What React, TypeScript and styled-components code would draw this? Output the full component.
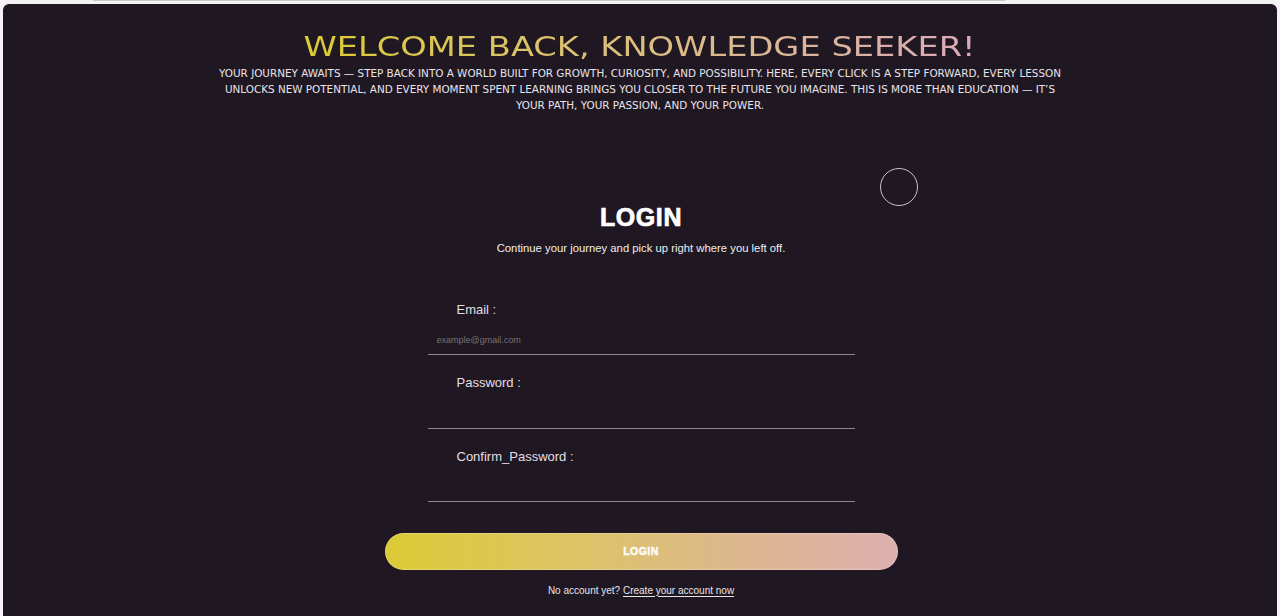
import React from "react";
import styled, { createGlobalStyle } from "styled-components";

const Global = createGlobalStyle`
  html, body { margin: 0; padding: 0; background: #f4f3f6; }
  body { font-family: "Liberation Sans", Arial, sans-serif; }
  * { box-sizing: border-box; }
`;

const Page = styled.div`
  width: 1280px;
  height: 616px;
  overflow: hidden;
  padding: 0 3px 0 3px;
  display: flex;
  flex-direction: column;
`;

const TopRule = styled.div`
  height: 1px;
  margin-left: 90px;
  width: 912px;
  background: #c9c7cc;
`;

const Panel = styled.main`
  margin-top: 3px;
  flex: 1;
  background: #1f1822;
  border-radius: 6px 6px 0 0;
  display: flex;
  flex-direction: column;
  align-items: center;
  padding-top: 28px;
`;

const Title = styled.h1`
  margin: 0;
  font-family: "DejaVu Sans", Verdana, sans-serif;
  font-weight: 400;
  font-size: 26px;
  line-height: 30px;
  letter-spacing: 0;
  background: linear-gradient(90deg, #dccb33 0%, #dcc07a 45%, #dcaab8 100%);
  -webkit-background-clip: text;
  background-clip: text;
  color: transparent;
  transform: scaleX(1.295);
  white-space: nowrap;
`;

const Intro = styled.p`
  margin: 3px 0 0;
  max-width: 852px;
  text-align: center;
  font-family: "DejaVu Sans", Verdana, sans-serif;
  font-size: 10.4px;
  line-height: 16px;
  color: #ebe3ea;
  text-transform: uppercase;
`;

const Card = styled.section`
  position: relative;
  width: 513px;
  margin-top: 89px;
  margin-left: 2px;
  display: flex;
  flex-direction: column;
  align-items: center;
`;

const Ring = styled.div`
  position: absolute;
  left: 495px;
  top: -34px;
  width: 38px;
  height: 38px;
  border-radius: 50%;
  border: 1px solid #c8c2c8;
`;

const CardTitle = styled.h2`
  margin: 0;
  font-family: "Liberation Sans", Arial, sans-serif;
  font-weight: 700;
  font-size: 25px;
  line-height: 30px;
  color: #ffffff;
  letter-spacing: 0.6px;
  -webkit-text-stroke: 0.7px #ffffff;
`;

const Subtitle = styled.p`
  margin: 9px 0 0;
  font-size: 11.3px;
  line-height: 14px;
  color: #f0eef0;
`;

const Form = styled.form`
  width: 427px;
  margin-top: 46.5px;
  display: flex;
  flex-direction: column;
  gap: 20px;
`;

const Field = styled.label`
  display: flex;
  flex-direction: column;
`;

const LabelText = styled.span`
  padding-left: 29px;
  font-size: 13px;
  line-height: 16px;
  color: #e4dfe4;
`;

const Input = styled.input`
  margin-top: 7.5px;
  height: 30px;
  background: transparent;
  border: none;
  border-bottom: 1px solid #8d8791;
  padding: 0 9px;
  font-family: "Liberation Sans", Arial, sans-serif;
  font-size: 9px;
  color: #ddd;
  outline: none;
  &::placeholder { color: #77717a; }
`;

const Button = styled.button`
  margin-top: 30.5px;
  width: 513px;
  height: 37px;
  border-radius: 19px;
  border: 1px solid rgba(255, 255, 255, 0.25);
  background: linear-gradient(90deg, #dccb35 0%, #dcc36a 40%, #dcb790 70%, #dcb0b0 100%);
  color: #ffffff;
  font-family: "Liberation Sans", Arial, sans-serif;
  font-weight: 700;
  font-size: 10.5px;
  letter-spacing: 0.5px;
  -webkit-text-stroke: 0.4px #ffffff;
  cursor: pointer;
`;

const Footer = styled.p`
  margin: 15px 0 0;
  font-size: 10px;
  line-height: 12px;
  color: #e8e4e8;
`;

const Link = styled.a`
  color: #e8e4e8;
  text-decoration: underline;
  text-underline-offset: 2px;
`;

export default function App() {
  return (
    <>
      <Global />
      <Page>
        <TopRule />
        <Panel>
          <Title>WELCOME BACK, KNOWLEDGE SEEKER!</Title>
          <Intro>
            Your journey awaits — step back into a world built for growth, curiosity, and possibility. Here, every click is a step forward, every lesson unlocks new potential, and every moment spent learning brings you closer to the future you imagine. This is more than education — it’s your path, your passion, and your power.
          </Intro>
          <Card>
            <Ring />
            <CardTitle>LOGIN</CardTitle>
            <Subtitle>Continue your journey and pick up right where you left off.</Subtitle>
            <Form onSubmit={(e) => e.preventDefault()}>
              <Field>
                <LabelText>Email :</LabelText>
                <Input type="email" placeholder="example@gmail.com" />
              </Field>
              <Field>
                <LabelText>Password :</LabelText>
                <Input type="password" />
              </Field>
              <Field>
                <LabelText>Confirm_Password :</LabelText>
                <Input type="password" />
              </Field>
            </Form>
            <Button type="button">LOGIN</Button>
            <Footer>
              No account yet? <Link href="#">Create your account now</Link>
            </Footer>
          </Card>
        </Panel>
      </Page>
    </>
  );
}
